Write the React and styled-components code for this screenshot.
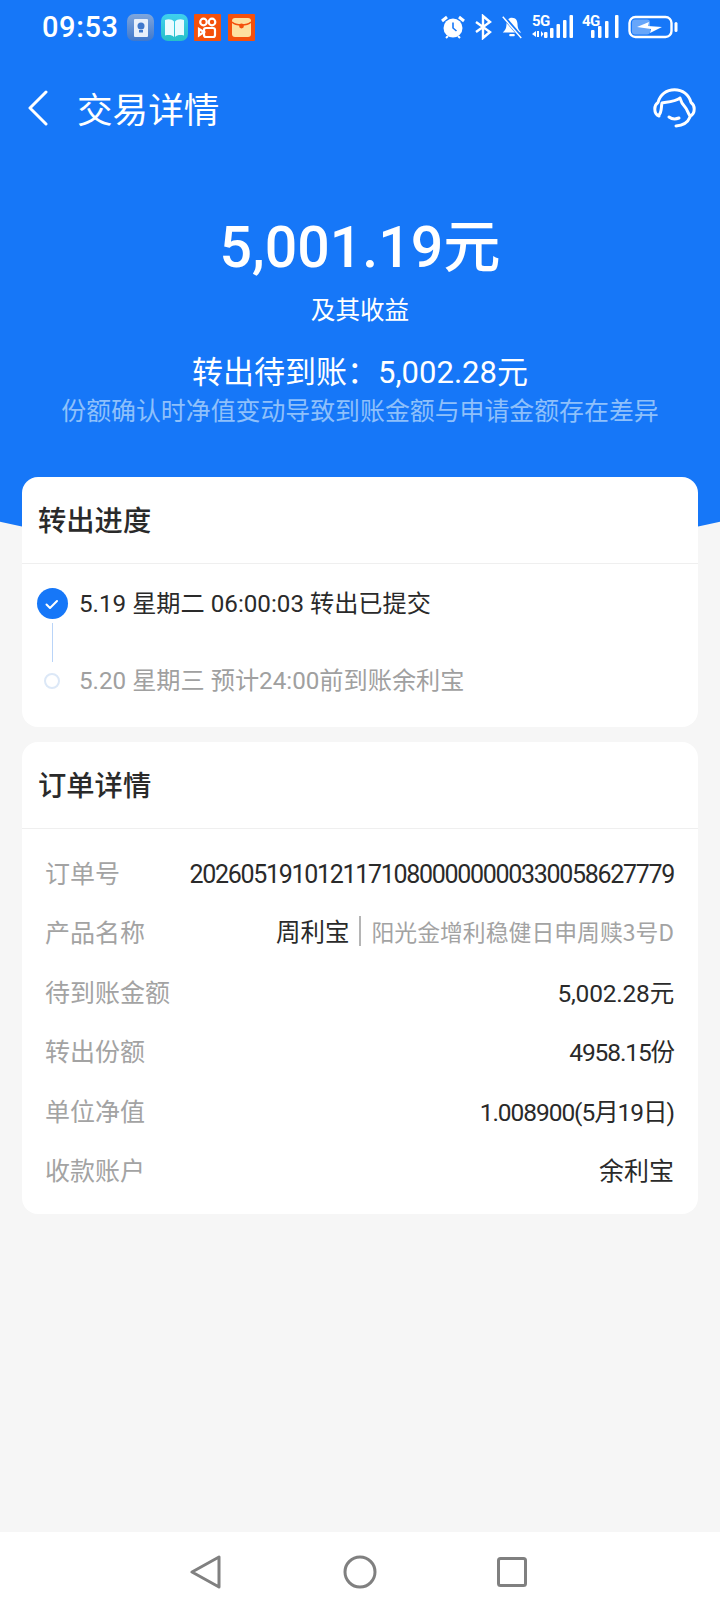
import React from "react";
import styled, { createGlobalStyle } from "styled-components";

const GlobalStyle = createGlobalStyle`
  html, body {
    margin: 0;
    padding: 0;
    background: #f6f6f6;
  }
  * {
    box-sizing: border-box;
  }
`;

const orderRows = [
  { label: "订单号", value: "20260519101211710800000000330058627779", size: 25, spacing: -1.3 },
  { label: "产品名称", value: "product" },
  { label: "待到账金额", value: "5,002.28元", size: 24.5, spacing: -0.2 },
  { label: "转出份额", value: "4958.15份", size: 24.5, spacing: -1.1 },
  { label: "单位净值", value: "1.008900(5月19日)", size: 24.5, spacing: -1.05 },
  { label: "收款账户", value: "余利宝", size: 25, spacing: 0 },
];

const App = () => {
  return (
    <Page>
      <GlobalStyle />
      <Hero>
        <StatusBar>
          <StatusLeft>
            <Time>09:53</Time>
            <AppIcon bg="linear-gradient(180deg, #7fa6dc, #3f78cc)">
              <svg width="27" height="27" viewBox="0 0 27 27">
                <rect x="7" y="5" width="14" height="18" rx="1" fill="#e8f0fb" />
                <circle cx="14" cy="12" r="3.500" fill="#3f78cc" />
                <rect x="12" y="16" width="4" height="2.500" fill="#3f78cc" />
              </svg>
            </AppIcon>
            <AppIcon bg="linear-gradient(180deg, #3fd0ee, #27c0c8)">
              <svg width="27" height="27" viewBox="0 0 27 27">
                <path d="M4 6c4-1.500 7-.5 9 1.500V23c-2-2-5-2.500-9-1.500z" fill="#e8fbff" />
                <path d="M23 6c-4-1.500-7-.5-9 1.500V23c2-2 5-2.500 9-1.500z" fill="#e8fbff" />
              </svg>
            </AppIcon>
            <AppIcon bg="#f4500c" square>
              <svg width="27" height="27" viewBox="0 0 27 27" fill="none" stroke="#fff" strokeWidth="2.200">
                <circle cx="9.500" cy="8" r="3.300" />
                <circle cx="18" cy="8" r="3.300" />
                <rect x="10" y="14" width="11" height="9" rx="2" />
                <path d="M10 18l-5-3v6.500z" />
              </svg>
            </AppIcon>
            <AppIcon bg="#f4500c" square>
              <svg width="27" height="27" viewBox="0 0 27 27">
                <rect x="4" y="4" width="19" height="19" rx="3" fill="#fde0a0" />
                <path d="M4 8c4 4 15 4 19 0" fill="none" stroke="#f4500c" strokeWidth="1.500" />
                <circle cx="13.500" cy="12" r="2.400" fill="#f4500c" />
              </svg>
            </AppIcon>
          </StatusLeft>
          <StatusRight>
            <svg width="26" height="26" viewBox="0 0 26 26">
              <circle cx="13" cy="14" r="9.500" fill="#fff" />
              <path d="M13 8.500V14l3.500 3" fill="none" stroke="#1677f8" strokeWidth="1.600" />
              <path d="M2 7l5-4M24 7l-5-4" stroke="#fff" strokeWidth="3" />
              <path d="M6 24l2-2M20 24l-2-2" stroke="#fff" strokeWidth="2" />
            </svg>
            <svg width="18" height="26" viewBox="0 0 18 26" fill="none" stroke="#fff" strokeWidth="2.400">
              <path d="M2 8l14 10-7 6V2l7 6L2 18" />
            </svg>
            <svg width="24" height="26" viewBox="0 0 26 26">
              <path d="M13 3c-4 0-6 3-6 7 0 5-2 7-4 9h20c-2-2-4-4-4-9 0-4-2-7-6-7z" fill="#fff" />
              <rect x="10" y="20.500" width="6" height="2.500" rx="1" fill="#fff" />
              <path d="M4 2l19 22" stroke="#1677f8" strokeWidth="4" />
              <path d="M3 2l20 23" stroke="#fff" strokeWidth="1.600" />
            </svg>
            <NetGroup>
              <NetLabel>5G</NetLabel>
              <svg width="42" height="26" viewBox="0 0 42 26" fill="#fff">
                <path d="M0 20l4-3v6zM5 17h2v6H5zM9 17l2.500 3L9 23z" />
                <rect x="12" y="18" width="3.500" height="6" rx="1" />
                <rect x="18" y="14" width="3.500" height="10" rx="1" />
                <rect x="24.500" y="10" width="3.500" height="14" rx="1" />
                <rect x="31" y="6" width="3.500" height="18" rx="1" />
                <rect x="37.500" y="1" width="3.500" height="23" rx="1" />
              </svg>
            </NetGroup>
            <NetGroup>
              <NetLabel>4G</NetLabel>
              <svg width="38" height="26" viewBox="0 0 38 26" fill="#fff">
                <rect x="9" y="16" width="3.500" height="8" rx="1" />
                <rect x="16" y="12" width="3.500" height="12" rx="1" />
                <rect x="23" y="7" width="3.500" height="17" rx="1" />
                <rect x="33" y="1" width="3.500" height="23" rx="1" />
              </svg>
            </NetGroup>
            <svg width="50" height="26" viewBox="0 0 50 26">
              <rect x="1.500" y="3" width="42" height="20" rx="6" fill="none" stroke="#fff" strokeWidth="2.400" />
              <rect x="4" y="5.500" width="18" height="15" rx="3" fill="#fff" opacity="0.35" />
              <path d="M9 13l12-5-1 4 14 1-12 6 1-4z" fill="#fff" />
              <rect x="46.500" y="8" width="3" height="10" rx="1.500" fill="#fff" />
            </svg>
          </StatusRight>
        </StatusBar>
        <NavBar>
          <NavLeft>
            <svg width="24" height="36" viewBox="0 0 24 36" fill="none" stroke="#fff" strokeWidth="3" strokeLinecap="round" strokeLinejoin="round">
              <path d="M21 2L5 18l16 16" />
            </svg>
            <NavTitle>交易详情</NavTitle>
          </NavLeft>
          <svg width="43" height="40" viewBox="0 0 43 40" fill="none" stroke="#fff" strokeWidth="3" strokeLinecap="round" strokeLinejoin="round">
            <path d="M6 28C3 27 1.800 24 1.800 21c0-3 1-5 3.200-6.500C7 6.500 13.500 1.800 21.500 1.800S36 6.500 38 14.500c2.200 1.500 3.200 3.500 3.200 6.500 0 3-1.200 6-4.200 7-2-3-3-7-5-9-2-2-4-5-5-9-3 3-12 4-18 5-1 4 0 9-3 12z" />
            <path d="M16 29c3 2.200 7 2.200 10 1" />
            <path d="M37 29c-2 5-6 8.500-14 9" />
          </svg>
        </NavBar>
        <Amount>5,001.19元</Amount>
        <AmountNote>及其收益</AmountNote>
        <Pending>转出待到账：5,002.28元</Pending>
        <PendingNote>份额确认时净值变动导致到账金额与申请金额存在差异</PendingNote>
      </Hero>
      <Cards>
        <Card>
          <CardTitle>转出进度</CardTitle>
          <Timeline>
            <Step>
              <StepMark>
                <DoneDot>
                  <svg width="16" height="16" viewBox="0 0 16 16" fill="none" stroke="#fff" strokeWidth="2" strokeLinecap="round" strokeLinejoin="round">
                    <path d="M2.500 8.500l3.500 3.500 7-7" />
                  </svg>
                </DoneDot>
                <StepLine />
              </StepMark>
              <StepText>5.19 星期二 06:00:03 转出已提交</StepText>
            </Step>
            <Step>
              <StepMark>
                <TodoDot />
              </StepMark>
              <StepText muted>5.20 星期三 预计24:00前到账余利宝</StepText>
            </Step>
          </Timeline>
        </Card>
        <Card>
          <CardTitle>订单详情</CardTitle>
          <OrderList>
            {orderRows.map((row) => (
              <OrderRow key={row.label}>
                <OrderLabel>{row.label}</OrderLabel>
                {row.value === "product" ? (
                  <ProductValue>
                    <ProductName>周利宝</ProductName>
                    <ProductFund>阳光金增利稳健日申周赎3号D</ProductFund>
                  </ProductValue>
                ) : (
                  <OrderValue size={row.size} spacing={row.spacing}>{row.value}</OrderValue>
                )}
              </OrderRow>
            ))}
          </OrderList>
        </Card>
      </Cards>
      <BottomNav>
        <svg width="32" height="34" viewBox="0 0 32 34" fill="none" stroke="#808080" strokeWidth="3" strokeLinejoin="round">
          <path d="M29 2v30L2 17z" />
        </svg>
        <svg width="34" height="34" viewBox="0 0 34 34" fill="none" stroke="#808080" strokeWidth="3">
          <circle cx="17" cy="17" r="15" />
        </svg>
        <svg width="30" height="30" viewBox="0 0 30 30" fill="none" stroke="#808080" strokeWidth="3" strokeLinejoin="round">
          <rect x="1.500" y="1.500" width="27" height="27" rx="2" />
        </svg>
      </BottomNav>
    </Page>
  );
};

export default App;

const FONT = `"Noto Sans CJK SC", "Roboto", "Noto Sans", sans-serif`;

const Page = styled.div`
  position: relative;
  display: flex;
  flex-direction: column;
  width: 720px;
  height: 1612px;
  overflow: hidden;
  background: #f6f6f6;
  font-family: ${FONT};
`;

const Hero = styled.div`
  height: 562px;
  margin-bottom: -85px;
  display: flex;
  flex-direction: column;
  align-items: center;
  color: #fff;
  background: #1677f8;
  clip-path: ellipse(970px 562px at 50% 0);
`;

const StatusBar = styled.div`
  width: 100%;
  height: 54px;
  padding: 0 42px;
  display: flex;
  align-items: center;
  justify-content: space-between;
`;

const StatusLeft = styled.div`
  display: flex;
  align-items: center;
  gap: 6.500px;
`;

const Time = styled.span`
  font-family: "Roboto", sans-serif;
  font-size: 29px;
  font-weight: 500;
  letter-spacing: 0.6px;
  margin-right: 2px;
`;

const AppIcon = styled.span`
  width: 27px;
  height: 27px;
  display: grid;
  place-items: center;
  background: ${(props) => props.bg};
  border-radius: ${(props) => (props.square ? "1px" : "7px")};
`;

const StatusRight = styled.div`
  display: flex;
  align-items: center;
  gap: 8px;
`;

const NetGroup = styled.span`
  position: relative;
  display: flex;
`;

const NetLabel = styled.span`
  position: absolute;
  left: 0;
  top: -1px;
  font-family: "Roboto", sans-serif;
  font-size: 15px;
  font-weight: 700;
  letter-spacing: -0.5px;
  line-height: 16px;
`;

const NavBar = styled.div`
  width: 100%;
  height: 50px;
  margin-top: 29px;
  padding: 0 24px 0 25px;
  display: flex;
  align-items: center;
  justify-content: space-between;
`;

const NavLeft = styled.div`
  display: flex;
  align-items: center;
  gap: 28px;
`;

const NavTitle = styled.span`
  font-size: 35.600px;
  line-height: 50px;
`;

const Amount = styled.div`
  margin-top: 80px;
  font-family: "Roboto", "Noto Sans CJK SC", sans-serif;
  font-size: 57.200px;
  font-weight: 500;
  line-height: 70px;
`;

const AmountNote = styled.div`
  margin-top: 8px;
  font-size: 24.600px;
  line-height: 34px;
`;

const Pending = styled.div`
  margin-top: 27px;
  font-family: "Roboto", "Noto Sans CJK SC", sans-serif;
  font-size: 31px;
  line-height: 42px;
`;

const PendingNote = styled.div`
  margin-top: -3px;
  font-size: 24.900px;
  line-height: 36px;
  color: #8ec0fb;
`;

const Cards = styled.div`
  position: relative;
  padding: 0 22px;
  display: flex;
  flex-direction: column;
  gap: 15px;
`;

const Card = styled.div`
  background: #fff;
  border-radius: 16px;
  overflow: hidden;
`;

const CardTitle = styled.div`
  height: 87px;
  padding: 0 0 4px 16px;
  display: flex;
  align-items: center;
  font-size: 28.300px;
  font-weight: 500;
  color: #2a2a2a;
  border-bottom: 1.5px solid #efefef;
`;

const Timeline = styled.div`
  padding: 24px 14px 25px;
  height: 163px;
`;

const Step = styled.div`
  display: flex;
  align-items: flex-start;
  height: 77px;
`;

const StepMark = styled.div`
  width: 43px;
  flex: none;
  display: flex;
  flex-direction: column;
  align-items: center;
  padding-right: 11px;
`;

const DoneDot = styled.span`
  width: 31px;
  height: 31px;
  display: grid;
  place-items: center;
  border-radius: 50%;
  background: #1677f8;
`;

const TodoDot = styled.span`
  width: 16px;
  height: 16px;
  margin-top: 8px;
  border-radius: 50%;
  border: 2px solid #dce8f7;
`;

const StepLine = styled.span`
  width: 1px;
  height: 39px;
  margin-top: 4px;
  background: #b9d4f8;
`;

const StepText = styled.div`
  font-family: "Roboto", "Noto Sans CJK SC", sans-serif;
  font-size: 24.200px;
  line-height: 32px;
  color: ${(props) => (props.muted ? "#a0a0a0" : "#2a2a2a")};
`;

const OrderList = styled.div`
  padding: 13px 24px 15px 23px;
`;

const OrderRow = styled.div`
  height: 59.500px;
  display: flex;
  align-items: center;
  justify-content: space-between;
`;

const OrderLabel = styled.span`
  flex: none;
  font-size: 25px;
  color: #a3a3a3;
`;

const OrderValue = styled.span`
  padding-top: 6px;
  font-family: "Roboto", "Noto Sans CJK SC", sans-serif;
  font-size: ${(props) => props.size}px;
  letter-spacing: ${(props) => props.spacing}px;
  line-height: 36px;
  color: #2a2a2a;
`;

const ProductValue = styled.span`
  display: flex;
  align-items: center;
`;

const ProductName = styled.span`
  font-size: 24.500px;
  color: #2a2a2a;
  padding-right: 10px;
  margin-right: 10px;
  line-height: 30px;
  border-right: 2px solid #b5b5b5;
`;

const ProductFund = styled.span`
  font-size: 22.850px;
  color: #a3a3a3;
`;

const BottomNav = styled.div`
  position: absolute;
  left: 0;
  right: 0;
  bottom: 0;
  height: 80px;
  padding: 0 193px 0 190px;
  display: flex;
  align-items: center;
  justify-content: space-between;
  background: #fff;
`;
